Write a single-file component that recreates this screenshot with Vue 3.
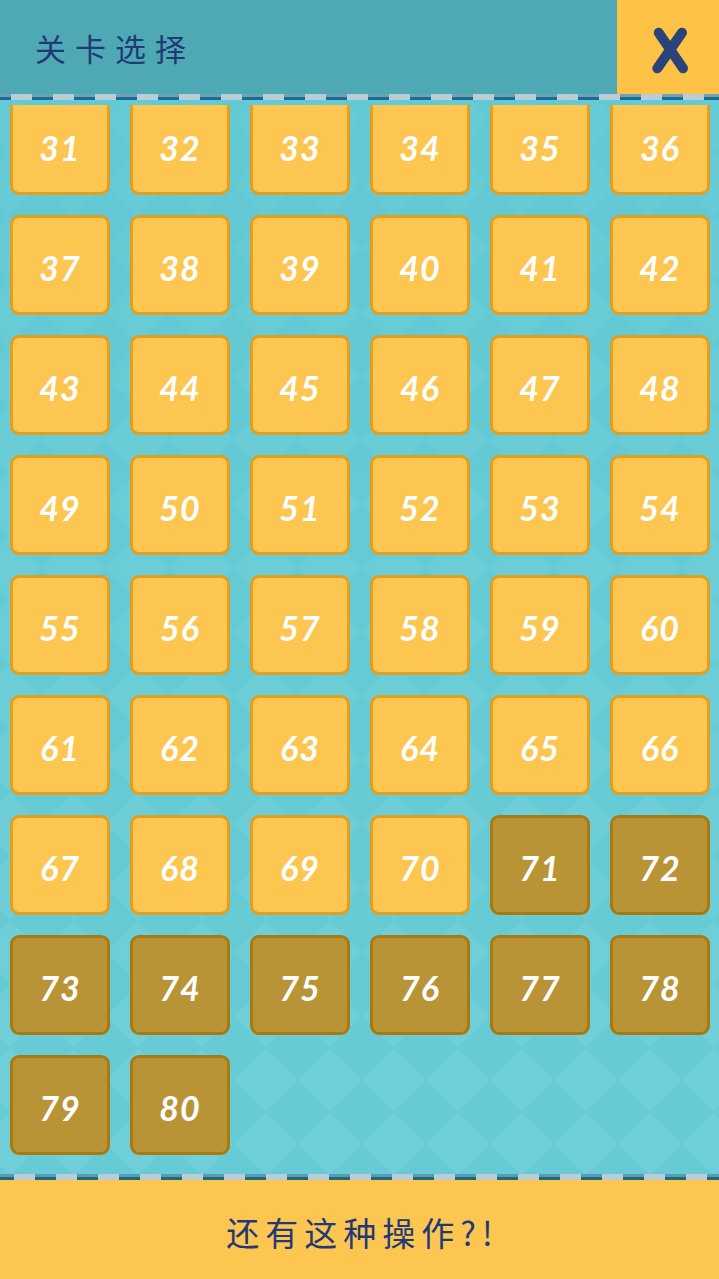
<template>
  <div class="page">
    <header class="top">
      <h1 class="title">关卡选择</h1>
      <button class="close">
        <svg width="44" height="52" viewBox="0 0 44 52">
          <path d="M9.7 7.7 L34 43.3 M33 7.7 L8.3 43.3" fill="none" stroke="#2a4379" stroke-width="10" stroke-linecap="round" />
        </svg>
      </button>
    </header>
    <div class="strip strip-top"></div>

    <main class="board">
      <!-- фон из ромбов -->
      <svg class="pattern" width="719" height="1074">
        <defs>
          <pattern id="rhombs" width="64" height="64" patternUnits="userSpaceOnUse" patternTransform="translate(42 52)">
            <rect width="64" height="64" fill="#6bcdd6" />
            <path d="M0 -32 L32 0 L0 32 L-32 0 Z M64 -32 L96 0 L64 32 L32 0 Z M0 32 L32 64 L0 96 L-32 64 Z M64 32 L96 64 L64 96 L32 64 Z" fill="#67cbd5" />
            <path d="M32 1 L63 32 L32 63 L1 32 Z" fill="#70cfd8" />
          </pattern>
          <linearGradient id="shade" x1="0" y1="0" x2="0" y2="1">
            <stop offset="0" stop-color="#5ec8d4" stop-opacity="0.6" />
            <stop offset="0.9" stop-color="#5ec8d4" stop-opacity="0" />
          </linearGradient>
        </defs>
        <rect width="719" height="1074" fill="url(#rhombs)" />
        <rect width="719" height="1074" fill="url(#shade)" />
      </svg>
      <div class="scroller">
        <div class="grid">
          <div v-for="n in levels" :key="n" class="tile" :class="{ locked: n > lastOpen }">{{ n }}</div>
        </div>
      </div>
    </main>

    <div class="strip strip-bottom"></div>
    <footer class="bottom">还有这种操作?!</footer>
  </div>
</template>

<script setup>
const lastOpen = 70
const levels = Array.from({ length: 50 }, (_, i) => i + 31)
</script>

<style>
html, body {
  margin: 0;
  background: #6bcdd6;
}
</style>

<style scoped>
.page {
  width: 719px;
  height: 1279px;
  display: flex;
  flex-direction: column;
  overflow: hidden;
  font-family: "Noto Sans CJK SC", "Noto Sans", sans-serif;
}

.top {
  height: 94px;
  display: flex;
  background: #4ea9b4;
}

.title {
  flex: 1;
  margin: 0;
  padding-left: 35px;
  line-height: 96px;
  font-size: 31px;
  font-weight: 400;
  letter-spacing: 9px;
  color: #1f3a75;
}

.close {
  width: 102px;
  padding: 8px 0 0 5px;
  border: 0;
  background: #fdc246;
  display: flex;
  align-items: center;
  justify-content: center;
}

.strip {
  height: 6px;
  background-repeat: repeat-x, no-repeat;
}

.strip-top {
  background-image:
    linear-gradient(90deg, transparent 21px, #b9cdd8 21px),
    linear-gradient(to bottom, #6ba3b8 50%, #1f6a92 50%);
  background-size: 42px 100%, 100% 100%;
  background-position: -10px 0, 0 0;
}

.strip-bottom {
  background-image:
    linear-gradient(90deg, transparent 21px, #b9cdd8 21px),
    linear-gradient(to bottom, #6199b4 50%, #1a6b7c 50%);
  background-size: 42px 100%, 100% 100%;
  background-position: -7px 0, 0 0;
}

.board {
  position: relative;
  flex: 1;
  min-height: 0;
  display: flex;
  flex-direction: column;
}

.pattern {
  position: absolute;
  left: 0;
  top: 0;
}

.scroller {
  position: relative;
  flex: 1;
  margin-top: 5px;
  min-height: 0;
  overflow: hidden;
}

.grid {
  margin-top: -10px;
  padding: 0 10px;
  display: grid;
  grid-template-columns: repeat(6, 100px);
  grid-auto-rows: 100px;
  gap: 20px;
}

.tile {
  box-sizing: border-box;
  padding-top: 4px;
  border: 3px solid #e0a020;
  border-radius: 9px;
  background: #fdc650;
  display: flex;
  align-items: center;
  justify-content: center;
  font-family: "Lato", "Open Sans", sans-serif;
  font-style: italic;
  font-weight: 700;
  font-size: 34px;
  letter-spacing: 1px;
  color: #fff;
}

.tile.locked {
  border-color: #a87a12;
  background: #b99437;
}

.bottom {
  height: 99px;
  padding-left: 6px;
  background: #fdc650;
  text-align: center;
  line-height: 104px;
  font-size: 33px;
  font-weight: 400;
  letter-spacing: 6px;
  color: #1f3a75;
}
</style>
